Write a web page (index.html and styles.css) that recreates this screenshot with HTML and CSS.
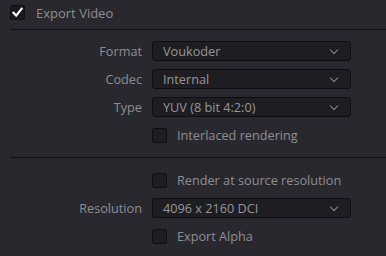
FILE: index.html
```html
<!DOCTYPE html>
<html lang="en">
<head>
    <meta charset="UTF-8">
    <title>Export Video</title>
    <link rel="stylesheet" href="styles.css">
</head>
<body>
    <div class="panel">
        <label class="header">
            <span class="check checked">
                <svg viewBox="0 0 15 15" width="15" height="15"><path d="M3.5 7.8 L6.2 10.6 L11.6 3.8" fill="none" stroke="#fff" stroke-width="2.2" stroke-linecap="square"/></svg>
            </span>
            <span>Export Video</span>
        </label>
        <div class="divider"></div>

        <div class="section">
            <div class="row">
                <span class="label">Format</span>
                <div class="select"><span>Voukoder</span><i class="chev"></i></div>
            </div>
            <div class="row">
                <span class="label">Codec</span>
                <div class="select"><span>Internal</span><i class="chev"></i></div>
            </div>
            <div class="row">
                <span class="label">Type</span>
                <div class="select"><span>YUV (8 bit 4:2:0)</span><i class="chev"></i></div>
            </div>
            <div class="row">
                <span class="label"></span>
                <label class="option"><span class="check"></span>Interlaced rendering</label>
            </div>
        </div>
        <div class="divider"></div>

        <div class="section">
            <div class="row">
                <span class="label"></span>
                <label class="option"><span class="check"></span>Render at source resolution</label>
            </div>
            <div class="row">
                <span class="label">Resolution</span>
                <div class="select"><span>4096 x 2160 DCI</span><i class="chev"></i></div>
            </div>
            <div class="row">
                <span class="label"></span>
                <label class="option"><span class="check"></span>Export Alpha</label>
            </div>
        </div>
    </div>
</body>
</html>
```

FILE: styles.css
```css
body {
    margin: 0;
    background-color: #28282e;
    color: #8e8e92;
    font-family: "Open Sans", "Noto Sans", sans-serif;
    font-size: 12.7px;
}

.panel {
    width: 386px;
    height: 256px;
    overflow: hidden;
}

/* Header with the main checkbox */
.header {
    display: flex;
    align-items: center;
    gap: 11px;
    height: 25px;
    padding-left: 10px;
    font-size: 13px;
}

.divider {
    height: 1px;
    margin: 4px 0 0 10px;
    background-color: #111113;
}

.section + .divider {
    margin-top: 0;
}

.section {
    padding: 7px 0 8px;
}

.divider + .section {
    padding-top: 8px;
}

.header + .divider + .section {
    padding-top: 7px;
}

.row {
    display: grid;
    grid-template-columns: 142px 199px;
    column-gap: 10px;
    align-items: center;
    height: 28px;
}

.label {
    text-align: right;
}

/* Dropdowns */
.select {
    display: flex;
    align-items: center;
    justify-content: space-between;
    box-sizing: border-box;
    height: 20px;
    padding: 0 10px;
    background-color: #1e1e22;
    border: 1px solid #0e0e10;
    border-radius: 3px;
    color: #96969a;
}

.chev {
    width: 5px;
    height: 5px;
    margin-right: 3px;
    margin-top: -3px;
    border-right: 1.5px solid #8a8a8e;
    border-bottom: 1.5px solid #8a8a8e;
    transform: rotate(45deg);
}

/* Checkboxes */
.option {
    display: flex;
    align-items: center;
    gap: 10px;
}

.check {
    display: block;
    box-sizing: border-box;
    width: 15px;
    height: 15px;
    background-color: #1e1e22;
    border: 1px solid #0e0e10;
    border-radius: 2px;
}

.check.checked {
    background-color: #1a1a1d;
}

.check svg {
    display: block;
    margin: -1px;
}
```
